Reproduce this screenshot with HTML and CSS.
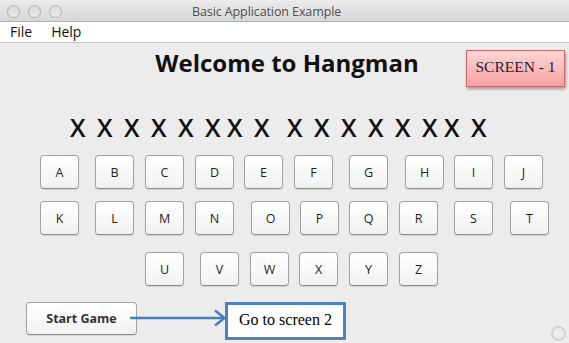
FILE: index.html
```html
<!DOCTYPE html>
<html>
<head>
<meta charset="utf-8">
<title>Basic Application Example</title>
<link rel="stylesheet" href="styles.css">
</head>
<body>
<div class="window">
  <header class="titlebar">
    <div class="lights"><span></span><span></span><span></span></div>
    <div class="wtitle">Basic Application Example</div>
  </header>
  <nav class="menubar"><span class="menu">File</span><span class="menu">Help</span></nav>
  <main class="content">
    <h1 class="title">Welcome to Hangman</h1>
    <div class="word">
      <span class="ch">X</span><span class="ch">X</span><span class="ch">X</span><span class="ch">X</span><span class="ch">X</span><span class="ch">X</span><span class="ch cl">X</span><span class="ch">X</span>
      <span class="ch far">X</span><span class="ch">X</span><span class="ch">X</span><span class="ch">X</span><span class="ch">X</span><span class="ch">X</span><span class="ch cl">X</span><span class="ch">X</span>
    </div>
    <div class="keys">
      <div class="row">
        <button class="key">A</button><button class="key sp">B</button><button class="key">C</button><button class="key">D</button><button class="key tt">E</button><button class="key">F</button><button class="key sp">G</button><button class="key spx">H</button><button class="key tt">I</button><button class="key">J</button>
      </div>
      <div class="row">
        <button class="key">K</button><button class="key sp">L</button><button class="key">M</button><button class="key">N</button><button class="key spx">O</button><button class="key tt">P</button><button class="key tt">Q</button><button class="key">R</button><button class="key sp">S</button><button class="key spx">T</button>
      </div>
      <div class="row row3">
        <button class="key">U</button><button class="key sp">V</button><button class="key">W</button><button class="key tt">X</button><button class="key">Y</button><button class="key">Z</button>
      </div>
    </div>
    <div class="actions"><button class="start">Start Game</button></div>
    <div class="grip"></div>
  </main>
  <div class="note note-screen">SCREEN - 1</div>
  <svg class="arrow" width="100" height="20" viewBox="0 0 100 20">
    <line x1="2" y1="10" x2="96" y2="10" stroke="#4a7ebb" stroke-width="2.5"/>
    <polyline points="87,2.5 96.5,10 87,17.5" fill="none" stroke="#4a7ebb" stroke-width="2.5" stroke-linejoin="miter"/>
  </svg>
  <div class="note note-go">Go to screen 2</div>
</div>
</body>
</html>
```

FILE: styles.css
```css
html, body {
  margin: 0;
  padding: 0;
}
body {
  width: 569px;
  height: 343px;
  overflow: hidden;
  background: #ececec;
  font-family: "Open Sans", "DejaVu Sans", sans-serif;
}
.window {
  position: relative;
  width: 569px;
  height: 343px;
}
.titlebar {
  height: 21px;
  border-bottom: 1px solid #b3b3b3;
  background: linear-gradient(#ececec, #d6d6d6);
  display: flex;
  align-items: center;
}
.lights {
  display: flex;
  gap: 8px;
  margin-left: 7px;
  margin-top: 2px;
}
.lights span {
  width: 11px;
  height: 11px;
  border-radius: 50%;
  border: 0.5px solid #b2b2b2;
  background: linear-gradient(#d9d9d9, #e9e9e9);
}
.wtitle {
  margin-left: 130px;
  margin-top: 1px;
  font-size: 12.5px;
  color: #4f4f4f;
  letter-spacing: -0.1px;
}
.menubar {
  height: 20px;
  background: #ffffff;
  border-bottom: 1px solid #c4c4c4;
  display: flex;
  padding-left: 10px;
  gap: 19px;
}
.menu {
  font-size: 14px;
  line-height: 20px;
  color: #111;
}
.content {
  position: relative;
  height: 300px;
  display: flex;
  flex-direction: column;
}
.title {
  margin: 4px 0 0 5px;
  text-align: center;
  font-size: 24px;
  line-height: 32px;
  font-weight: 700;
  color: #111;
}
.word {
  margin-top: 33px;
  display: flex;
  padding-left: 70px;
  gap: 13px;
  font-size: 25px;
  font-weight: 600;
  line-height: 30px;
  color: #111;
}
.ch {
  width: 14px;
  text-align: center;
}
.ch.cl { margin-left: -5px; }
.ch.far { margin-left: 6px; }
.keys {
  margin-top: 13px;
  display: flex;
  flex-direction: column;
  gap: 12px;
}
.row {
  display: flex;
  gap: 11px;
  padding-left: 40px;
}
.row3 {
  padding-left: 145px;
  margin-top: 5px;
}
.key, .start {
  box-sizing: border-box;
  height: 34px;
  width: 39px;
  padding: 0;
  border: 1px solid #a3a3a3;
  border-bottom-color: #8e8e8e;
  border-radius: 4px;
  background: linear-gradient(#ffffff, #f1f1f1);
  box-shadow: 0 1px 1px rgba(0, 0, 0, 0.12);
  font-family: "Open Sans", "DejaVu Sans", sans-serif;
  font-size: 12.5px;
  color: #1e1e1e;
}
.key.sp { margin-left: 5px; }
.key.spx { margin-left: 6px; }
.key.tt { margin-left: -1px; }
.actions {
  margin-top: 16px;
  padding-left: 26px;
}
.start {
  width: 111px;
  height: 33px;
  font-weight: 700;
  font-size: 12.5px;
  color: #333;
}
.grip {
  position: absolute;
  left: 551px;
  top: 283px;
  width: 11px;
  height: 11px;
  border: 2px solid #d2d2d2;
  border-radius: 50%;
}
.note {
  position: absolute;
  box-sizing: border-box;
  display: flex;
  align-items: center;
  justify-content: center;
  font-family: "Liberation Serif", "Times New Roman", serif;
}
.note-screen {
  left: 466px;
  top: 50px;
  width: 99px;
  height: 37px;
  border: 1px solid #c86868;
  background: linear-gradient(#ffd4d4, #f6a2a2);
  box-shadow: 1px 2px 3px rgba(0, 0, 0, 0.35);
  font-size: 15.5px;
  color: #1c1c3a;
  padding-bottom: 4px;
}
.note-go {
  left: 225px;
  top: 302px;
  width: 121px;
  height: 38px;
  border: 3px solid #4f81bd;
  background: #ffffff;
  font-size: 16px;
  color: #000;
  padding-bottom: 2px;
}
.arrow {
  position: absolute;
  left: 128px;
  top: 308px;
}
```
